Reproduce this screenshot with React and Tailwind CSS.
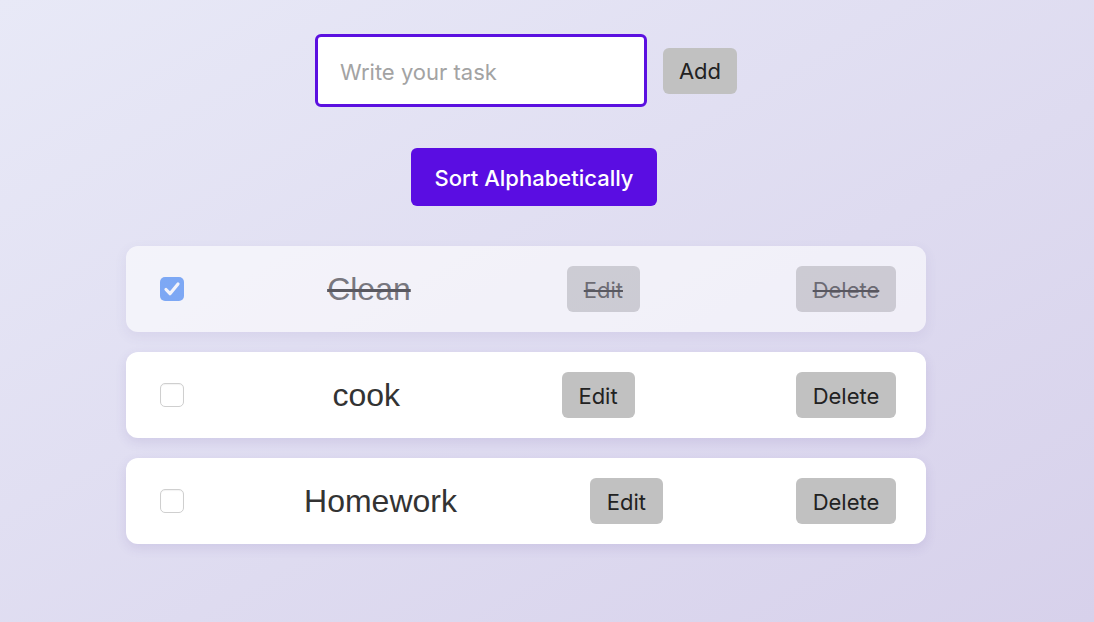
import { useState } from 'react'

const initialTasks = [
  { id: 1, text: 'Clean', done: true },
  { id: 2, text: 'cook', done: false },
  { id: 3, text: 'Homework', done: false },
]

function Checkbox({ checked, onChange }) {
  return (
    <button
      onClick={onChange}
      className={`w-6 h-6 -mr-[13px] shrink-0 rounded-[5px] flex items-center justify-center ${
        checked ? 'bg-[#3b82f6]' : 'bg-white border border-[#cfcfcf] shadow-[inset_0_1px_1px_rgba(0,0,0,0.05)]'
      }`}
    >
      {checked && (
        <svg width="24" height="24" viewBox="0 0 24 24" fill="none">
          <path d="M6 12.5l4 4.2L18 7" stroke="white" strokeWidth="3.2" strokeLinecap="round" strokeLinejoin="round" />
        </svg>
      )}
    </button>
  )
}

export default function App() {
  const [tasks, setTasks] = useState(initialTasks)
  const [text, setText] = useState('')

  const toggle = (id) => {
    setTasks(tasks.map((t) => (t.id === id ? { ...t, done: !t.done } : t)))
  }

  const addTask = () => {
    if (!text.trim()) return
    setTasks([...tasks, { id: Date.now(), text: text.trim(), done: false }])
    setText('')
  }

  const sortTasks = () => {
    setTasks([...tasks].sort((a, b) => a.text.localeCompare(b.text)))
  }

  const removeTask = (id) => setTasks(tasks.filter((t) => t.id !== id))

  return (
    <div className="min-h-screen h-[622px] bg-gradient-to-br from-[#e8e9f7] to-[#d7d1eb] font-['Inter',sans-serif]">
      <div className="w-[1052px] flex flex-col items-center pt-[34px]">
        {/* input row */}
        <div className="flex items-center gap-4">
          <input
            value={text}
            onChange={(e) => setText(e.target.value)}
            placeholder="Write your task"
            className="w-[332px] h-[73px] bg-white border-[3px] border-[#5b10e0] rounded-md pl-[22px] pt-[2px] text-[22px] text-[#333] placeholder:text-[#a3a3a3] outline-none"
          />
          <button
            onClick={addTask}
            className="w-[74px] h-[46px] pt-[2px] bg-[#c1c1c1] text-[#222] text-[22px] rounded-md"
          >
            Add
          </button>
        </div>

        {/* sort */}
        <button
          onClick={sortTasks}
          className="mt-[41px] ml-4 w-[246px] h-[58px] pt-[2px] bg-[#5a0de2] text-white text-[22px] font-medium rounded-md"
        >
          Sort Alphabetically
        </button>

        {/* list */}
        <div className="mt-10 flex flex-col gap-5">
          {tasks.map((t) => (
            <div
              key={t.id}
              className={`w-[800px] h-[86px] flex items-center justify-between pl-[34px] pr-[30px] bg-white rounded-xl shadow-[0_4px_12px_rgba(80,60,150,0.12)] ${
                t.done ? 'opacity-60 line-through' : ''
              }`}
            >
              <Checkbox checked={t.done} onChange={() => toggle(t.id)} />
              <span className="font-['Liberation_Sans',Arial,sans-serif] text-[32px] text-[#333]">{t.text}</span>
              <button className="w-[73px] h-[46px] pt-[2px] bg-[#c1c1c1] text-[#222] text-[22px] rounded-md">Edit</button>
              <button
                onClick={() => removeTask(t.id)}
                className="w-[100px] h-[46px] pt-[2px] bg-[#c1c1c1] text-[#222] text-[22px] rounded-md"
              >
                Delete
              </button>
            </div>
          ))}
        </div>
      </div>
    </div>
  )
}
